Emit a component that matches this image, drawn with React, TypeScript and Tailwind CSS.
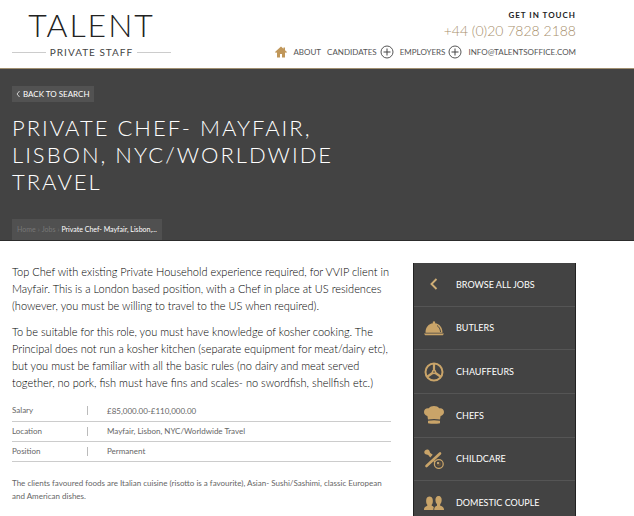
import type { ReactNode } from "react";

function HomeIcon() {
  return (
    <svg viewBox="0 0 24 24" className="h-3 w-3 fill-[#c0975a]" aria-hidden="true">
      <path d="M12 1 0 12l2 2 2-1.500V23h6v-7h4v7h6V12.500L22 14l2-2-4-3.700V3h-3v2.600z" />
    </svg>
  );
}

function PlusIcon() {
  return (
    <svg viewBox="0 0 14 14" className="h-[14px] w-[14px] fill-none stroke-[#444]" aria-hidden="true">
      <circle cx="7" cy="7" r="6" strokeWidth="0.9" />
      <path d="M7 3.500v7M3.500 7h7" strokeWidth="1" />
    </svg>
  );
}

function ChevronIcon() {
  return (
    <svg viewBox="0 0 20 20" className="h-5 w-5 fill-none stroke-[#cfae76]" aria-hidden="true">
      <path d="M12.500 5 7.500 10l5 5" strokeWidth="1.900" />
    </svg>
  );
}

function ClocheIcon() {
  return (
    <svg viewBox="0 0 20 20" className="h-5 w-5 fill-[#c9a469]" aria-hidden="true">
      <path d="M1.500 14.800C1.500 9.500 4.500 5.800 9 5.300 8.400 4 9 3.200 10 3.200s1.600.8 1 2.100c4.500.5 7.500 4.200 7.500 9.500z" />
      <path d="M0 15.600h20l-1.200 1.600H1.200z" />
      <path d="M13 7.500c2 1.300 3.200 3.500 3.600 6.500" fill="none" stroke="#434343" strokeWidth="0.900" />
    </svg>
  );
}

function WheelIcon() {
  return (
    <svg viewBox="0 0 20 20" className="h-5 w-5 fill-none stroke-[#c9a469]" aria-hidden="true">
      <circle cx="10" cy="10" r="8.500" strokeWidth="2" />
      <path d="M10 2v8M10 10l-6.500 4.500M10 10l6.500 4.500" strokeWidth="2.200" />
      <circle cx="10" cy="10" r="2.300" className="fill-[#c9a469]" stroke="none" />
      <circle cx="10" cy="10" r="0.800" fill="#434343" stroke="none" />
    </svg>
  );
}

function ChefHatIcon() {
  return (
    <svg viewBox="0 0 20 20" className="h-5 w-5 fill-[#c9a469]" aria-hidden="true">
      <path d="M4 14.500 3.400 11C1.500 10.500 0 9 0 7c0-2.600 2.300-4.300 4.800-3.700C5.800 1.800 7.800 1 10 1s4.200.8 5.200 2.300C17.700 2.700 20 4.400 20 7c0 2-1.500 3.500-3.400 4L16 14.500c-4-.8-8-.8-12 0z" />
      <path d="M4 15.800c4-.8 8-.8 12 0v2.400c-4 .8-8 .8-12 0z" />
    </svg>
  );
}

function ChildcareIcon() {
  return (
    <svg viewBox="0 0 20 20" className="h-5 w-5" aria-hidden="true">
      <path d="M1 1.500C2.500 0 5 .3 5.600 2.200c.3 1.200.6 1.800 1.800 2.600l1.300 1L6.300 8.500 5.200 7.200C4.500 6.300 3.800 6 2.600 5.600.3 5-.4 3 1 1.500z" fill="#c9a469" />
      <path d="M2.500 17 16 4.500" stroke="#c9a469" strokeWidth="2.600" strokeLinecap="round" />
      <path d="m10 12 2 2" stroke="#c9a469" strokeWidth="2" />
      <circle cx="14.800" cy="15" r="4.400" fill="#434343" stroke="#c9a469" strokeWidth="1.300" />
      <circle cx="15" cy="15" r="2.300" fill="#66533b" />
      <circle cx="14" cy="14" r="1" fill="#d8bd8a" />
    </svg>
  );
}

function CoupleIcon() {
  return (
    <svg viewBox="0 0 20 20" className="h-5 w-5 fill-[#c9a469]" aria-hidden="true">
      <path d="M0 17c0-2.800 1-3.300 3.300-4.200v-1C2.300 11 2 8.800 2.200 7 2.400 4.600 4 3.600 5.500 3.600s3.100 1 3.300 3.400c.2 1.800-.1 4-1.100 4.800v1c1 .4 1.700.7 2.100 1.400-.3.800-.4 1.600-.4 2.800z" />
      <path d="M10.200 17c0-2.800.8-3.500 2.800-4.300v-1.500c-.9-.8-1.400-1.900-1.500-3.100-.5-3.100.9-5.100 3-5.100s3.600 2 3.100 5.100c-.1 1.200-.6 2.300-1.400 3.100v1.500c2.600.8 3.800 1.500 3.800 4.300z" />
    </svg>
  );
}

const categories: { label: string; icon: ReactNode }[] = [
  { label: "BROWSE ALL JOBS", icon: <ChevronIcon /> },
  { label: "BUTLERS", icon: <ClocheIcon /> },
  { label: "CHAUFFEURS", icon: <WheelIcon /> },
  { label: "CHEFS", icon: <ChefHatIcon /> },
  { label: "CHILDCARE", icon: <ChildcareIcon /> },
  { label: "DOMESTIC COUPLE", icon: <CoupleIcon /> },
];

const details = [
  ["Salary", "£85,000.00-£110,000.00"],
  ["Location", "Mayfair, Lisbon, NYC/Worldwide Travel"],
  ["Position", "Permanent"],
];

function Header() {
  return (
    <header className="flex h-[69px] justify-between border-b border-[#a08f70] pr-[58px] pl-3">
      <a href="#" className="flex w-[159px] flex-col items-center pt-[7px] text-[#222]">
        <span className="text-[32px] leading-9 font-light tracking-[2px]">TALENT</span>
        <span className="flex w-full items-center gap-1 text-[10px] leading-[18px] tracking-[1px] whitespace-nowrap text-[#444]">
          <span className="h-px flex-1 bg-[#ccc]" />
          PRIVATE STAFF
          <span className="h-px flex-1 bg-[#ccc]" />
        </span>
      </a>
      <div className="flex flex-col items-end pt-[9px] whitespace-nowrap">
        <p className="text-[8px] leading-3 font-bold tracking-[1px] text-[#222]">GET IN TOUCH</p>
        <a href="tel:+442078282188" className="text-[14px] leading-5 font-light text-[#a88f6c]">
          +44 (0)20 7828 2188
        </a>
        <nav className="mt-1 flex items-center gap-[6px] text-[8px] leading-[14px] text-[#555]">
          <a href="#" aria-label="Home"><HomeIcon /></a>
          <a href="#">ABOUT</a>
          <a href="#" className="flex items-center gap-[3px]">CANDIDATES <PlusIcon /></a>
          <a href="#" className="flex items-center gap-[3px]">EMPLOYERS <PlusIcon /></a>
          <a href="mailto:info@talentsoffice.com">INFO@TALENTSOFFICE.COM</a>
        </nav>
      </div>
    </header>
  );
}

function Hero() {
  return (
    <section className="flex h-[172px] flex-col items-start border-b border-[#2c2c2c] bg-[#434343] pt-[17px] pl-3 text-white">
      <button type="button" className="flex h-4 items-center gap-[3px] bg-[#525252] px-1 text-[8px]">
        <svg viewBox="0 0 4 8" className="h-2 w-1 fill-none stroke-[#ddd]" aria-hidden="true">
          <path d="M3.500 1 1 4l2.500 3" strokeWidth="0.900" />
        </svg>
        BACK TO SEARCH
      </button>
      <h1 className="mt-3 text-[22px] leading-[27px] font-light tracking-[2px] whitespace-nowrap">
        PRIVATE CHEF- MAYFAIR,
        <br />
        LISBON, NYC/WORLDWIDE
        <br />
        TRAVEL
      </h1>
      <nav aria-label="Breadcrumb" className="mt-auto flex h-[21px] items-center gap-[2px] bg-[#505050] px-[5px] text-[7px] whitespace-nowrap text-[#777]">
        <a href="#">Home</a>
        <span>›</span>
        <a href="#">Jobs</a>
        <span>›</span>
        <span className="text-white">Private Chef- Mayfair, Lisbon,...</span>
      </nav>
    </section>
  );
}

export default function App() {
  return (
    <div className="h-screen overflow-hidden bg-white font-[Lato,'Open_Sans',sans-serif]">
      <Header />
      <Hero />
      <main className="flex items-start gap-[22px] pt-[22px] pr-[58px] pl-3">
        <article className="min-w-0 flex-1 whitespace-nowrap">
          <div className="flex flex-col gap-[9px] text-[11px] leading-[17px] font-light text-black">
            <p>
              Top Chef with existing Private Household experience required, for VVIP client in
              <br />
              Mayfair. This is a London based position, with a Chef in place at US residences
              <br />
              (however, you must be willing to travel to the US when required).
            </p>
            <p>
              To be suitable for this role, you must have knowledge of kosher cooking. The
              <br />
              Principal does not run a kosher kitchen (separate equipment for meat/dairy etc),
              <br />
              but you must be familiar with all the basic rules (no dairy and meat served
              <br />
              together, no pork, fish must have fins and scales- no swordfish, shellfish etc.)
            </p>
          </div>
          <table className="mt-[10px] w-full text-left text-[8px] leading-3 text-[#666]">
            <tbody>
              {details.map(([name, value]) => (
                <tr key={name} className="h-5 border-b border-[#ccc]">
                  <th scope="row" className="w-[76px] p-0 font-normal">
                    <span className="block h-[9px] border-r border-[#bbb] leading-[9px]">{name}</span>
                  </th>
                  <td className="p-0 pl-[19px]">{value}</td>
                </tr>
              ))}
            </tbody>
          </table>
          <p className="mt-[15px] text-[8px] leading-[13px] text-[#666]">
            The clients favoured foods are Italian cuisine (risotto is a favourite), Asian- Sushi/Sashimi, classic European
            <br />
            and American dishes.
          </p>
        </article>
        <nav aria-label="Job categories" className="w-[163px] shrink-0">
          <ul className="grid h-[262px] grid-rows-6 border-x border-[#222] bg-[#434343]">
            {categories.map(({ label, icon }) => (
              <li key={label} className="border-b border-[#555]">
                <a href="#" className="flex h-full items-center gap-3 pl-[10px] text-[9px] text-white">
                  {icon}
                  {label}
                </a>
              </li>
            ))}
          </ul>
        </nav>
      </main>
    </div>
  );
}
